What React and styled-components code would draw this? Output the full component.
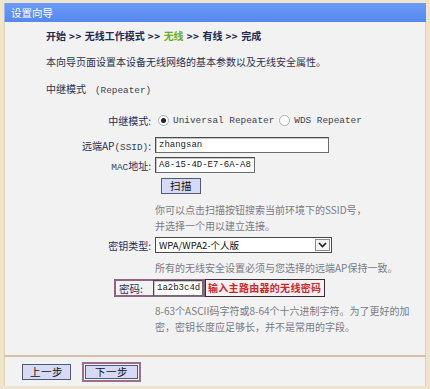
import React from "react";
import styled, { createGlobalStyle } from "styled-components";

const Global = createGlobalStyle`
  html, body { margin: 0; padding: 0; }
  body {
    width: 430px; height: 389px; overflow: hidden;
    font-family: "Noto Sans CJK SC", "Noto Sans", sans-serif;
    font-size: 10px;
    background: #efe4cf;
  }
`;

const Frame = styled.div`
  box-sizing: border-box;
  width: 430px;
  height: 389px;
  padding: 3px 4px 3px 4px;
  background: #efe4cf;
  display: flex;
  flex-direction: column;
`;

const TitleBar = styled.div`
  height: 19px;
  background: linear-gradient(#6d9bf6, #5587ef);
  color: #ffffff;
  font-size: 10.5px;
  line-height: 19px;
  padding-left: 6px;
  border-left: 1px solid #9db6ea;
`;

const Content = styled.div`
  flex: 1;
  background: #f2f2f2;
  padding: 6px 0 0 41px;
  display: flex;
  flex-direction: column;
  border-left: 1px solid #e2cfae;
  border-right: 1px solid #e2cfae;
`;

const Steps = styled.div`
  height: 16px;
  line-height: 16px;
  font-weight: bold;
  color: #1d2a52;
  font-size: 10px;
  white-space: nowrap;
`;

const Sep = styled.span`
  margin: 0 3px;
  letter-spacing: 0.5px;
`;

const Current = styled.span`
  color: #6aaa28;
`;

const Line = styled.div`
  height: 16px;
  line-height: 16px;
  color: ${(p) => p.$color || "#2a3150"};
  margin-top: ${(p) => p.$mt || 0}px;
  padding-left: ${(p) => p.$indent || 0}px;
  white-space: nowrap;
`;

const Mono = styled.span`
  font-family: "Liberation Mono", "DejaVu Sans Mono", monospace;
  font-size: 9.4px;
  color: #3a3f55;
`;

const Row = styled.div`
  display: flex;
  align-items: center;
  height: 18px;
  margin-top: ${(p) => p.$mt || 0}px;
`;

const Label = styled.div`
  width: 105px;
  text-align: right;
  color: #22305a;
  margin-right: 4px;
  white-space: nowrap;
  flex-shrink: 0;
`;

const Radio = styled.span`
  box-sizing: border-box;
  width: 11px;
  height: 11px;
  border-radius: 50%;
  border: 1px solid #a8acb8;
  background: #fff;
  display: inline-flex;
  align-items: center;
  justify-content: center;
  margin: 0 4px 0 ${(p) => p.$ml || 0}px;
  &::after {
    content: "";
    width: 5px;
    height: 5px;
    border-radius: 50%;
    background: ${(p) => (p.$on ? "#222" : "transparent")};
  }
`;

const Input = styled.div`
  box-sizing: border-box;
  width: ${(p) => p.$w}px;
  height: 16px;
  background: #fff;
  border: 1px solid #6d6d6d;
  border-top-color: #4a4a4a;
  border-left-color: #4a4a4a;
  box-shadow: inset 1px 1px 0 #c8c8c8;
  padding-left: 3px;
  line-height: 14px;
  font-family: "Liberation Mono", "DejaVu Sans Mono", monospace;
  font-size: 9px;
  color: #1a1a1a;
  white-space: nowrap;
  overflow: hidden;
`;

const Select = styled.div`
  box-sizing: border-box;
  width: 177px;
  height: 16px;
  background: #fff;
  border: 1px solid #4a4a4a;
  display: flex;
  align-items: center;
  padding-left: 3px;
  font-size: 9.5px;
  color: #111;
`;

const SelectText = styled.span`
  flex: 1;
  white-space: nowrap;
`;

const Arrow = styled.span`
  box-sizing: border-box;
  width: 15px;
  height: 12px;
  margin-right: 1px;
  border: 1px solid #8a8a8a;
  background: #f4f4f4;
  display: flex;
  align-items: center;
  justify-content: center;
`;

const Button = styled.div`
  box-sizing: border-box;
  height: ${(p) => p.$h || 16}px;
  padding: 0 ${(p) => p.$px || 6}px;
  background: #d6daf4;
  border: 1px solid #4f5a78;
  color: #111;
  font-size: 10.5px;
  line-height: ${(p) => (p.$h || 16) - 2}px;
  margin-left: ${(p) => p.$ml || 0}px;
  letter-spacing: 0.5px;
`;

const PassFrame = styled.div`
  box-sizing: border-box;
  display: flex;
  align-items: center;
  height: 18px;
  margin-left: 68px;
  border: 2px solid #8f6482;
  padding-left: 3px;
`;

const PassLabel = styled.span`
  width: 34px;
  color: #22305a;
  font-size: 10.5px;
`;

const Hint = styled.div`
  box-sizing: border-box;
  height: 18px;
  border: 1px solid #3b2a33;
  background: #f8f2f4;
  color: #d0262a;
  font-weight: bold;
  font-size: 10px;
  line-height: 16px;
  padding: 0 3px 0 2px;
  letter-spacing: 0.3px;
  white-space: nowrap;
`;

const Separator = styled.div`
  height: 2px;
  background: #d8c2a6;
`;

const Footer = styled.div`
  height: 29px;
  background: #f2f2f2;
  display: flex;
  align-items: center;
  padding-left: 17px;
  border-left: 1px solid #e2cfae;
  border-right: 1px solid #e2cfae;
`;

const NextFrame = styled.div`
  box-sizing: border-box;
  margin-left: 11px;
  border: 2px solid #9c6e8c;
  padding: 1px;
`;

export default function App() {
  return (
    <>
      <Global />
      <Frame>
        <TitleBar>设置向导</TitleBar>
        <Content>
          <Steps>
            开始<Sep>&gt;&gt;</Sep>无线工作模式<Sep>&gt;&gt;</Sep>
            <Current>无线</Current>
            <Sep>&gt;&gt;</Sep>有线<Sep>&gt;&gt;</Sep>完成
          </Steps>
          <Line $mt={10}>本向导页面设置本设备无线网络的基本参数以及无线安全属性。</Line>
          <Line $mt={11}>
            中继模式&nbsp;&nbsp;&nbsp;&nbsp;<Mono>(Repeater)</Mono>
          </Line>

          <Row $mt={14}>
            <Label>中继模式:</Label>
            <Radio $on $ml={3} />
            <Mono>Universal Repeater</Mono>
            <Radio $ml={5} />
            <Mono>WDS Repeater</Mono>
          </Row>
          <Row $mt={7}>
            <Label>
              远端AP<Mono>(SSID)</Mono>:
            </Label>
            <Input $w={174}>zhangsan</Input>
          </Row>
          <Row $mt={2}>
            <Label>
              <Mono>MAC</Mono>地址:
            </Label>
            <Input $w={100}>A8-15-4D-E7-6A-A8</Input>
          </Row>
          <Row $mt={3}>
            <Label />
            <Button $ml={6} $px={8}>扫描</Button>
          </Row>
          <Line $mt={7} $indent={109} $color="#7a7a86">
            你可以点击扫描按钮搜索当前环境下的SSID号，
          </Line>
          <Line $indent={109} $color="#7a7a86">
            并选择一个用以建立连接。
          </Line>
          <Row $mt={2}>
            <Label>密钥类型:</Label>
            <Select>
              <SelectText>WPA/WPA2-个人版</SelectText>
              <Arrow>
                <svg width="9" height="6" viewBox="0 0 9 6">
                  <path d="M1 1 L4.5 4.5 L8 1" fill="none" stroke="#1a1a1a" strokeWidth="1.6" />
                </svg>
              </Arrow>
            </Select>
          </Row>
          <Line $mt={6} $indent={109} $color="#7a7a86">
            所有的无线安全设置必须与您选择的远端AP保持一致。
          </Line>
          <Row $mt={3}>
            <PassFrame>
              <PassLabel>密码:</PassLabel>
              <Input $w={50}>1a2b3c4d</Input>
            </PassFrame>
            <Hint>输入主路由器的无线密码</Hint>
          </Row>
          <Line $mt={6} $indent={109} $color="#7a7a86">
            8-63个ASCII码字符或8-64个十六进制字符。为了更好的加
          </Line>
          <Line $indent={109} $color="#7a7a86">
            密，密钥长度应足够长，并不是常用的字段。
          </Line>
        </Content>
        <Separator />
        <Footer>
          <Button $px={7}>上一步</Button>
          <NextFrame>
            <Button $px={9} $h={14}>下一步</Button>
          </NextFrame>
        </Footer>
      </Frame>
    </>
  );
}
